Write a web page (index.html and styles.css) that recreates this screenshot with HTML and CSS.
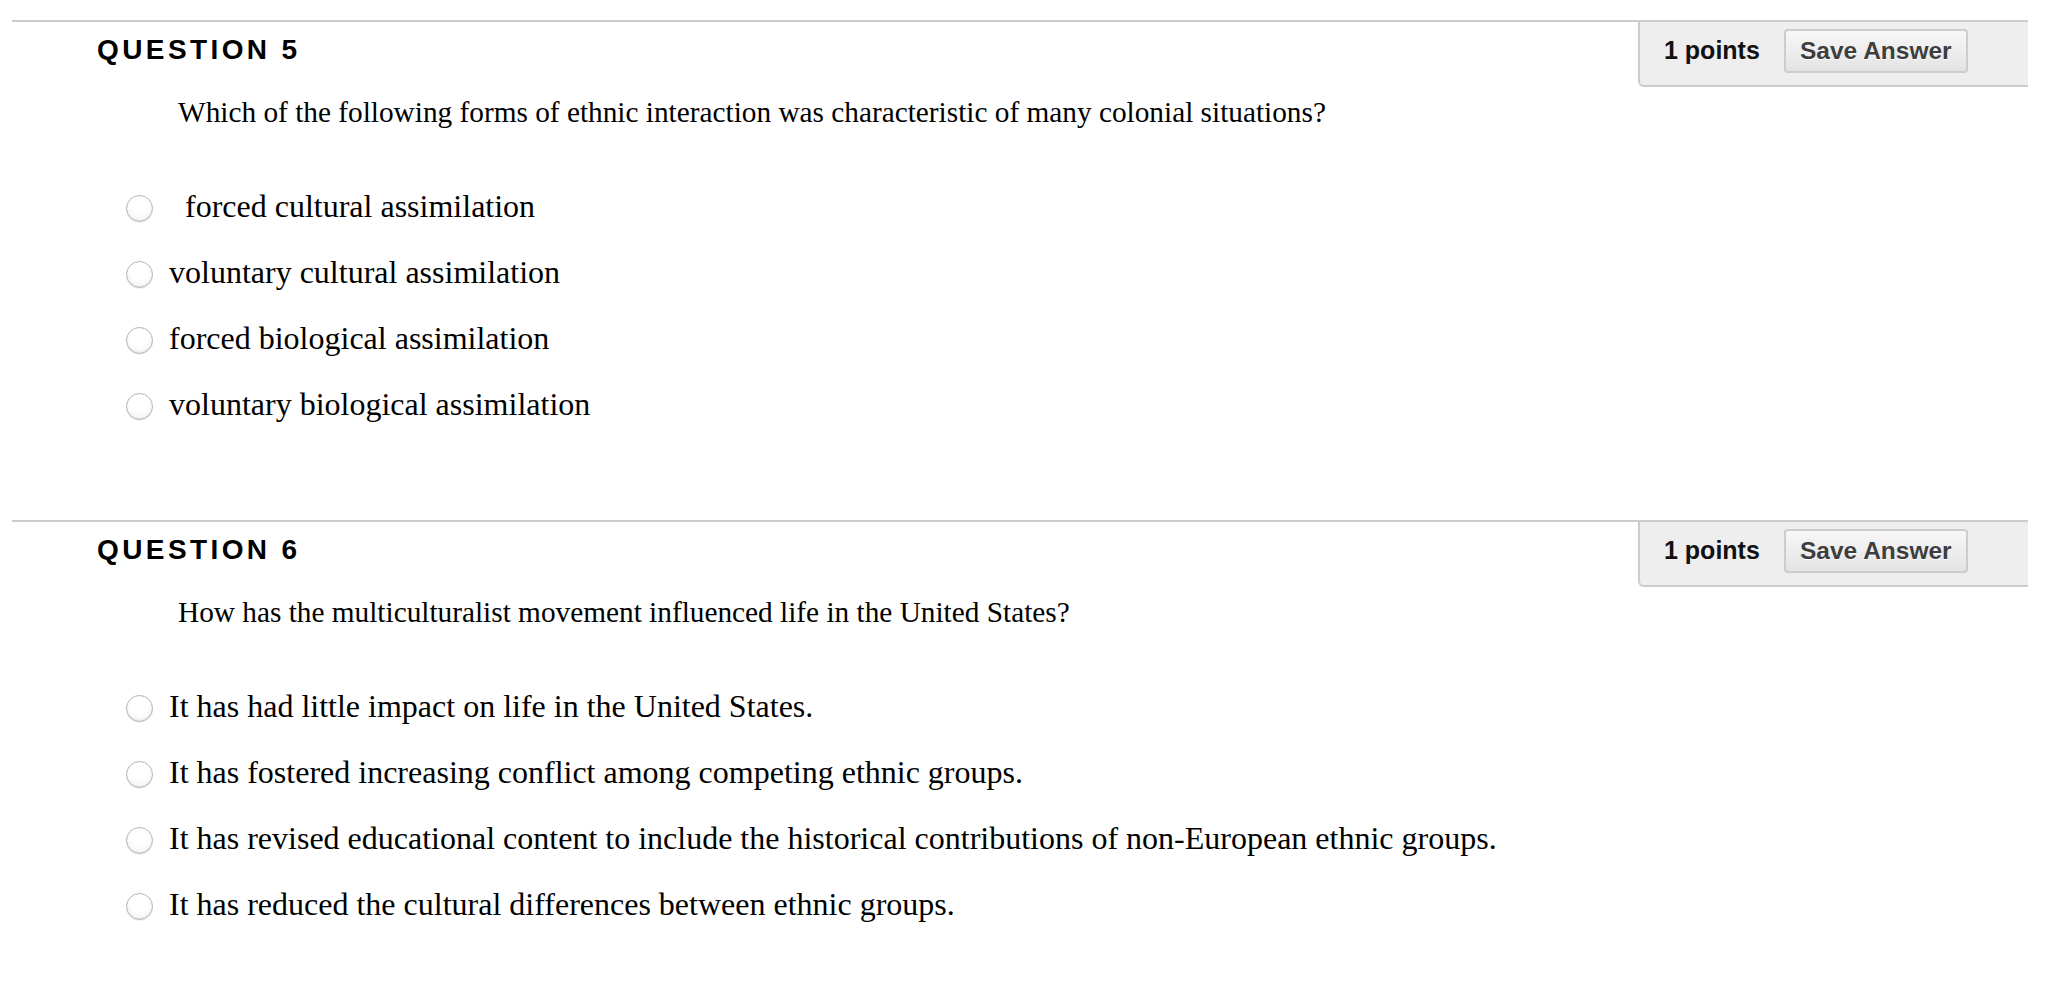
FILE: index.html
```html
<!DOCTYPE html>
<html lang="en">
<head>
<meta charset="utf-8">
<title>Questions</title>
<link rel="stylesheet" href="styles.css">
</head>
<body>
<div class="page">
  <section class="question">
    <div class="q-head">
      <h3 class="q-title">QUESTION 5</h3>
      <div class="points-box">
        <span class="points">1 points</span>
        <button class="save" type="button">Save Answer</button>
      </div>
    </div>
    <div class="q-text">Which of the following forms of ethnic interaction was characteristic of many colonial situations?</div>
    <ul class="options">
      <li class="option"><span class="radio"></span><span class="label indent">forced cultural assimilation</span></li>
      <li class="option"><span class="radio"></span><span class="label">voluntary cultural assimilation</span></li>
      <li class="option"><span class="radio"></span><span class="label">forced biological assimilation</span></li>
      <li class="option"><span class="radio"></span><span class="label">voluntary biological assimilation</span></li>
    </ul>
  </section>
  <section class="question">
    <div class="q-head">
      <h3 class="q-title">QUESTION 6</h3>
      <div class="points-box">
        <span class="points">1 points</span>
        <button class="save" type="button">Save Answer</button>
      </div>
    </div>
    <div class="q-text">How has the multiculturalist movement influenced life in the United States?</div>
    <ul class="options">
      <li class="option"><span class="radio"></span><span class="label">It has had little impact on life in the United States.</span></li>
      <li class="option"><span class="radio"></span><span class="label">It has fostered increasing conflict among competing ethnic groups.</span></li>
      <li class="option"><span class="radio"></span><span class="label">It has revised educational content to include the historical contributions of non-European ethnic groups.</span></li>
      <li class="option"><span class="radio"></span><span class="label">It has reduced the cultural differences between ethnic groups.</span></li>
    </ul>
  </section>
</div>
</body>
</html>
```

FILE: styles.css
```css
html, body {
  margin: 0;
  padding: 0;
  background: #ffffff;
  color: #000000;
}

.page {
  padding: 20px 24px 0 12px;
}

.question {
  border-top: 2px solid #cccccc;
  height: 498px;
}

.q-head {
  display: flex;
  justify-content: space-between;
  align-items: flex-start;
}

.q-title {
  margin: 0;
  padding: 12px 0 0 85px;
  font-family: "Liberation Sans", Arial, sans-serif;
  font-weight: bold;
  font-size: 28px;
  line-height: 32px;
  letter-spacing: 3.4px;
  color: #000000;
}

.points-box {
  box-sizing: border-box;
  width: 390px;
  height: 65px;
  display: flex;
  align-items: flex-start;
  gap: 24px;
  padding: 7px 0 0 24px;
  background: #eeeeee;
  border-left: 2px solid #cccccc;
  border-bottom: 2px solid #cccccc;
  border-bottom-left-radius: 6px;
}

.points {
  font-family: "Liberation Sans", Arial, sans-serif;
  font-weight: bold;
  font-size: 25px;
  line-height: 30px;
  margin-top: 6px;
  color: #111111;
}

.save {
  box-sizing: border-box;
  width: 184px;
  height: 44px;
  padding: 0;
  margin: 0;
  border: 2px solid #cccccc;
  border-radius: 4px;
  background: linear-gradient(#f7f7f7, #e3e3e3);
  font-family: "Liberation Sans", Arial, sans-serif;
  font-weight: bold;
  font-size: 24.5px;
  line-height: 40px;
  color: #3e3e3e;
  text-shadow: 0 1px 0 #ffffff;
}

.q-text {
  margin: 10px 0 0 166px;
  font-family: "Liberation Serif", "Times New Roman", serif;
  font-size: 29.3px;
  line-height: 30px;
}

.options {
  list-style: none;
  margin: 46px 0 0 0;
  padding: 0 0 0 114px;
}

.option {
  display: flex;
  align-items: center;
  gap: 16px;
  height: 66px;
}

.radio {
  box-sizing: border-box;
  flex: none;
  width: 27px;
  height: 27px;
  margin-top: 5px;
  border-radius: 50%;
  border: 1px solid #b4b4b4;
  background: radial-gradient(circle at 50% 35%, #ffffff 40%, #efefef 100%);
  box-shadow: inset 0 -1px 1px rgba(0, 0, 0, 0.08), 0 1px 0 rgba(0, 0, 0, 0.05);
}

.label {
  font-family: "Liberation Serif", "Times New Roman", serif;
  font-size: 32px;
  line-height: 36px;
}

.indent {
  padding-left: 16px;
}
```
